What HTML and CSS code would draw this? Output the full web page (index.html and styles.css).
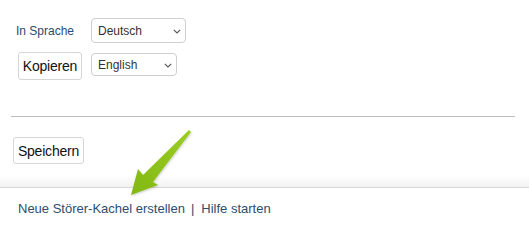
FILE: index.html
```html
<!DOCTYPE html>
<html lang="de">
<head>
<meta charset="utf-8">
<title>Sprache kopieren</title>
<link rel="stylesheet" href="styles.css">
</head>
<body>
<div class="page">
  <div class="form">
    <span class="label">In Sprache</span>
    <span class="sel-wrap sel-de">
      <select class="sel"><option>Deutsch</option></select>
      <svg class="chev" width="8" height="5" viewBox="0 0 8 5"><path d="M0.8 0.8 L4 4 L7.2 0.8" fill="none" stroke="#555" stroke-width="1.1"/></svg>
    </span>
    <button class="btn btn-copy" type="button">Kopieren</button>
    <span class="sel-wrap sel-en">
      <select class="sel"><option>English</option></select>
      <svg class="chev" width="8" height="5" viewBox="0 0 8 5"><path d="M0.8 0.8 L4 4 L7.2 0.8" fill="none" stroke="#555" stroke-width="1.1"/></svg>
    </span>
  </div>
  <div class="rule"></div>
  <button class="btn btn-save" type="button">Speichern</button>
  <div class="shade"></div>
  <footer class="footer">
    <a class="flink" href="#">Neue Störer-Kachel erstellen</a><span class="sep">|</span><a class="flink" href="#">Hilfe starten</a>
  </footer>
  <svg class="arrow" width="80" height="80" viewBox="0 0 80 80">
    <defs>
      <linearGradient id="ag" x1="1" y1="0" x2="0" y2="1">
        <stop offset="0" stop-color="#9ccd25"/>
        <stop offset="1" stop-color="#82b814"/>
      </linearGradient>
      <filter id="sh" x="-20%" y="-20%" width="140%" height="140%">
        <feDropShadow dx="0.6" dy="1" stdDeviation="0.9" flood-color="#000" flood-opacity="0.22"/>
      </filter>
    </defs>
    <polygon points="69,8 71,10 33,60 38,63 11,73 18,47 23,53" fill="url(#ag)" filter="url(#sh)"/>
  </svg>
</div>
</body>
</html>
```

FILE: styles.css
```css
html, body {
  margin: 0;
  padding: 0;
  background: #fff;
}

body {
  font-family: "Liberation Sans", Arial, sans-serif;
  color: #333;
}

.page {
  position: relative;
  width: 529px;
  height: 221px;
  overflow: hidden;
}

.form {
  display: grid;
  grid-template-columns: 91px auto;
  row-gap: 9px;
  padding-top: 18px;
  justify-items: start;
}

.label {
  padding-left: 16px;
  font-size: 12px;
  color: #2c4a6e;
  align-self: center;
  line-height: 14px;
  padding-top: 1px;
}

.sel-wrap {
  position: relative;
  display: block;
}

.sel {
  -webkit-appearance: none;
  appearance: none;
  box-sizing: border-box;
  border: 1px solid #cfcfcf;
  border-radius: 4px;
  background: #fff;
  font-family: "Liberation Sans", Arial, sans-serif;
  font-size: 12px;
  color: #333;
  padding: 0 0 0 6px;
  margin: 0;
  display: block;
}

.sel-de .sel {
  width: 95px;
  height: 25px;
}

.sel-en {
  align-self: start;
  margin-top: 1px;
}

.sel-en .sel {
  width: 86px;
  height: 23px;
}

.chev {
  position: absolute;
  top: 50%;
  right: 5px;
  margin-top: -2px;
}

.btn {
  box-sizing: border-box;
  border: 1px solid #d6d6d6;
  border-radius: 3px;
  background: #fff;
  font-family: "Liberation Sans", Arial, sans-serif;
  font-size: 14px;
  letter-spacing: -0.2px;
  color: #111;
  padding: 0;
  margin: 0;
  display: block;
}

.btn-copy {
  margin-left: 18px;
  width: 64px;
  height: 28px;
}

.rule {
  margin: 36px 14px 0 11px;
  border-top: 1px solid #bdbdbd;
}

.btn-save {
  margin: 20px 0 0 13px;
  width: 71px;
  height: 27px;
}

.shade {
  margin-top: 11px;
  height: 12px;
  background: linear-gradient(to bottom, rgba(255,255,255,0), #f2f2f2);
}

.footer {
  border-top: 1px solid #d8d8d8;
  padding: 13px 0 0 18px;
  font-size: 13px;
  line-height: 15px;
  color: #2d4d70;
  display: flex;
}

.flink {
  color: #2d4d70;
  text-decoration: none;
}

.sep {
  margin: 0 7px 0 6px;
  color: #2d4d70;
}

.arrow {
  position: absolute;
  left: 120px;
  top: 122px;
}
```
